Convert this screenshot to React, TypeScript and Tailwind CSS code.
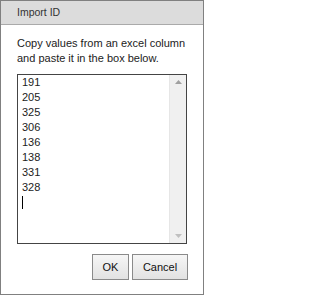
import React from 'react';

const ids = ['191', '205', '325', '306', '136', '138', '331', '328', ''];

const App: React.FC = () => {
  return (
    <div className="w-[204px] h-[295px] bg-white border border-[#808080] flex flex-col font-['Liberation_Sans',Arial,sans-serif] text-[#222]">
      {/* Title bar */}
      <div className="h-[24px] shrink-0 bg-[#dcdcdc] border-b border-[#aaaaaa] pl-[16px] flex items-center text-[10.5px] text-[#333]">
        Import ID
      </div>

      <div className="flex-1 flex flex-col px-[16px] pt-[11px]">
        <p className="text-[11px] leading-[15px] text-[#222]">
          Copy values from an excel column and paste it in the box below.
        </p>

        {/* Textarea */}
        <div className="mt-[8px] h-[170px] border border-[#444] flex">
          <div className="flex-1 pl-[4px] text-[11px] leading-[15px] text-[#222]">
            {ids.map((id, i) =>
              id ? (
                <div key={i}>{id}</div>
              ) : (
                <div key={i} className="h-[15px] flex items-center">
                  <span className="w-px h-[13px] bg-black" />
                </div>
              )
            )}
          </div>
          <div className="w-[17px] bg-[#f0f0f0] border-l border-[#e6e6e6] flex flex-col justify-between items-center py-[5px]">
            <svg width="7" height="4" viewBox="0 0 7 4">
              <path d="M3.5 0 L7 4 L0 4 Z" fill="#a0a0a0" />
            </svg>
            <svg width="7" height="4" viewBox="0 0 7 4">
              <path d="M0 0 L7 0 L3.5 4 Z" fill="#c0c0c0" />
            </svg>
          </div>
        </div>

        {/* Buttons */}
        <div className="mt-[10px] -mr-[1px] flex justify-end gap-[3px] text-[11px] text-[#111]">
          <button className="w-[37px] h-[26px] border border-[#8a8a8a] bg-gradient-to-b from-[#f6f6f6] to-[#e2e2e2]">
            OK
          </button>
          <button className="w-[56px] h-[26px] border border-[#8a8a8a] bg-gradient-to-b from-[#f6f6f6] to-[#e2e2e2]">
            Cancel
          </button>
        </div>
      </div>
    </div>
  );
};

export default App;
